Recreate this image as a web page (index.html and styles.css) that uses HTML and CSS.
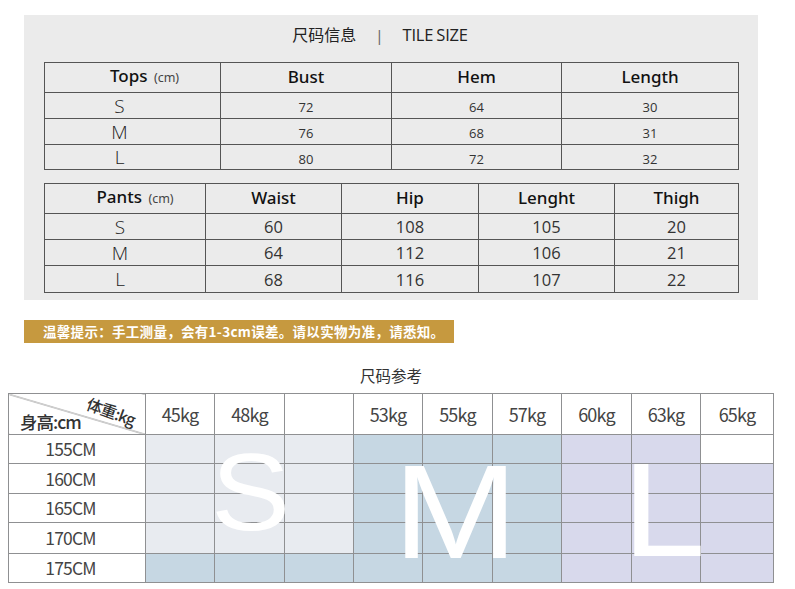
FILE: index.html
```html
<!DOCTYPE html>
<html lang="zh">
<head>
<meta charset="utf-8">
<link rel="stylesheet" href="styles.css">
</head>
<body>
<div class="page">
  <section class="panel">
    <h1 class="title"><span class="cn">尺码信息</span><span class="bar">|</span><span class="en">TILE SIZE</span></h1>
    <table class="spec tops">
      <colgroup><col style="width:176px"><col style="width:171px"><col style="width:170px"><col style="width:177px"></colgroup>
      <tr class="head"><th class="first">Tops <small>(cm)</small></th><th>Bust</th><th>Hem</th><th>Length</th></tr>
      <tr class="r1"><td class="sz">S</td><td>72</td><td>64</td><td>30</td></tr>
      <tr class="r1"><td class="sz">M</td><td>76</td><td>68</td><td>31</td></tr>
      <tr class="r2"><td class="sz">L</td><td>80</td><td>72</td><td>32</td></tr>
    </table>
    <table class="spec pants">
      <colgroup><col style="width:161px"><col style="width:136px"><col style="width:137px"><col style="width:136px"><col style="width:124px"></colgroup>
      <tr class="head"><th class="first">Pants <small>(cm)</small></th><th>Waist</th><th>Hip</th><th>Lenght</th><th>Thigh</th></tr>
      <tr class="r1"><td class="sz">S</td><td>60</td><td>108</td><td>105</td><td>20</td></tr>
      <tr class="r1"><td class="sz">M</td><td>64</td><td>112</td><td>106</td><td>21</td></tr>
      <tr class="r3"><td class="sz">L</td><td>68</td><td>116</td><td>107</td><td>22</td></tr>
    </table>
  </section>

  <div class="notice">温馨提示：手工测量，会有1-3cm误差。请以实物为准，请悉知。</div>

  <h2 class="ref-title">尺码参考</h2>

  <div class="chart-wrap">
    <table class="chart">
      <colgroup>
        <col style="width:137px"><col style="width:69px"><col style="width:70px"><col style="width:69px"><col style="width:69px"><col style="width:70px"><col style="width:69px"><col style="width:70px"><col style="width:69px"><col style="width:73px">
      </colgroup>
      <tr class="h0">
        <th class="diag"><span class="wt">体重:kg</span><span class="ht">身高:cm</span></th>
        <th>45kg</th><th>48kg</th><th></th><th>53kg</th><th>55kg</th><th>57kg</th><th>60kg</th><th>63kg</th><th>65kg</th>
      </tr>
      <tr class="h1"><td class="lbl">155CM</td><td class="s"></td><td class="s"></td><td class="s"></td><td class="m"></td><td class="m"></td><td class="m"></td><td class="l"></td><td class="l"></td><td class="w"></td></tr>
      <tr class="h2"><td class="lbl">160CM</td><td class="s"></td><td class="s"></td><td class="s"></td><td class="m"></td><td class="m"></td><td class="m"></td><td class="l"></td><td class="l"></td><td class="l"></td></tr>
      <tr class="h3"><td class="lbl">165CM</td><td class="s"></td><td class="s"></td><td class="s"></td><td class="m"></td><td class="m"></td><td class="m"></td><td class="l"></td><td class="l"></td><td class="l"></td></tr>
      <tr class="h4"><td class="lbl">170CM</td><td class="s"></td><td class="s"></td><td class="s"></td><td class="m"></td><td class="m"></td><td class="m"></td><td class="l"></td><td class="l"></td><td class="l"></td></tr>
      <tr class="h5"><td class="lbl">175CM</td><td class="m"></td><td class="m"></td><td class="m"></td><td class="m"></td><td class="m"></td><td class="m"></td><td class="l"></td><td class="l"></td><td class="l"></td></tr>
    </table>
    <span class="big big-s">S</span>
    <span class="big big-m">M</span>
    <span class="big big-l">L</span>
  </div>
</div>
</body>
</html>
```

FILE: styles.css
```css
* { box-sizing: border-box; }
html, body { margin: 0; padding: 0; background: #fff; }
body { font-family: "Open Sans", "Noto Sans", "Noto Sans CJK SC", sans-serif; color: #222; }

.page { padding-top: 15px; width: 795px; }

.panel {
  margin-left: 24px;
  width: 734px;
  height: 285px;
  background: #ebebeb;
  padding: 0 20px;
}

.title {
  margin: 0;
  height: 47px;
  padding-top: 0;
  padding-right: 22px;
  text-align: center;
  font-weight: 400;
  line-height: 28px;
  color: #222;
}
.title .cn { font-family: "Noto Sans CJK SC", sans-serif; font-size: 16px; }
.title .bar { margin: 0 19px 0 19px; color: #666; font-size: 15px; font-family: "Noto Sans", sans-serif; }
.title .en { font-family: "Open Sans", sans-serif; font-size: 16.5px; letter-spacing: -0.2px; word-spacing: -1px; }

.spec {
  border-collapse: collapse;
  table-layout: fixed;
  width: 694px;
  background: #ebebeb;
}
.spec th, .spec td {
  border: 1px solid #555;
  padding: 0;
  text-align: center;
  vertical-align: middle;
  line-height: 18px;
}
.spec th {
  font-family: "Noto Sans", sans-serif;
  font-weight: 500;
  font-size: 17px;
  color: #111;
  height: 30px;
  padding-bottom: 2px;
}
.spec th small { font-size: 12.5px; font-weight: 400; color: #444; margin-left: 2px; }
.tops th.first { padding-left: 24px; }
.pants th.first { padding-left: 20px; }
.spec td { color: #333; }
.tops td { font-size: 13px; padding-top: 3px; }
.pants td { font-size: 16.5px; padding-top: 1px; }
.spec td.sz { font-size: 19px; font-weight: 300; color: #222; padding-top: 0; font-family: "Open Sans", sans-serif; }
.tops td.sz { padding-right: 26px; }
.pants td.sz { padding-right: 10px; }
.spec tr.r1 td { height: 26px; }
.spec tr.r2 td { height: 25px; }
.spec tr.r3 td { height: 27px; }
.pants { margin-top: 13px; }

.notice {
  margin: 20px 0 0 24px;
  width: 430px;
  height: 23px;
  background: #c6993f;
  color: #fff;
  font-family: "Noto Sans CJK SC", sans-serif;
  font-weight: 700;
  font-size: 13.5px;
  line-height: 23px;
  padding-left: 19px;
  letter-spacing: 0.3px;
  white-space: nowrap;
}

.ref-title {
  margin: 0;
  height: 50px;
  width: 782px;
  padding-top: 21px;
  text-align: center;
  font-family: "Noto Sans CJK SC", sans-serif;
  font-weight: 400;
  font-size: 15.5px;
  line-height: 22px;
  color: #333;
}

.chart-wrap {
  position: relative;
  margin-left: 8px;
  width: 765px;
}
.chart {
  border-collapse: collapse;
  table-layout: fixed;
  width: 765px;
}
.chart th, .chart td {
  border: 1px solid #8f9092;
  padding: 0;
  text-align: center;
  vertical-align: middle;
  font-family: "Noto Sans CJK SC", sans-serif;
  font-weight: 400;
  color: #444;
  line-height: 20px;
}
.chart th { font-size: 18px; height: 41px; background: #fff; padding-top: 0; letter-spacing: -0.8px; }
.chart td.lbl { font-size: 17.5px; background: #fff; padding-right: 13px; letter-spacing: -0.8px; }
.chart tr.h1 td { height: 29px; }
.chart tr.h2 td { height: 30px; }
.chart tr.h3 td { height: 29px; }
.chart tr.h4 td { height: 31px; }
.chart tr.h5 td { height: 29px; }
.chart td.s { background: #e8ebf0; }
.chart td.m { background: #c6d7e3; }
.chart td.l { background: #d8d9ec; }
.chart td.w { background: #fff; }

.chart th.diag {
  position: relative;
  background: linear-gradient(to top right, #fff calc(50% - 0.8px), #888 50%, #fff calc(50% + 0.8px));
}
.diag .wt {
  position: absolute;
  left: 82px;
  top: -1px;
  font-size: 16px;
  font-weight: 500;
  color: #333;
  transform: rotate(20deg);
  transform-origin: left top;
  letter-spacing: -1px;
}
.diag .ht {
  position: absolute;
  left: 11px;
  top: 18px;
  font-size: 17.5px;
  font-weight: 500;
  color: #333;
  letter-spacing: -1px;
}

.big {
  position: absolute;
  color: #fff;
  font-family: "Liberation Sans", sans-serif;
  font-weight: 400;
  line-height: 1;
  transform-origin: left top;
}
.big-s { left: 203px; top: 44px; font-size: 110px; transform: scaleX(1.08); }
.big-m { left: 385px; top: 52px; font-size: 134px; transform: scaleX(1.12); }
.big-l { left: 614px; top: 50px; font-size: 134px; transform: scaleX(1.12); }
```
